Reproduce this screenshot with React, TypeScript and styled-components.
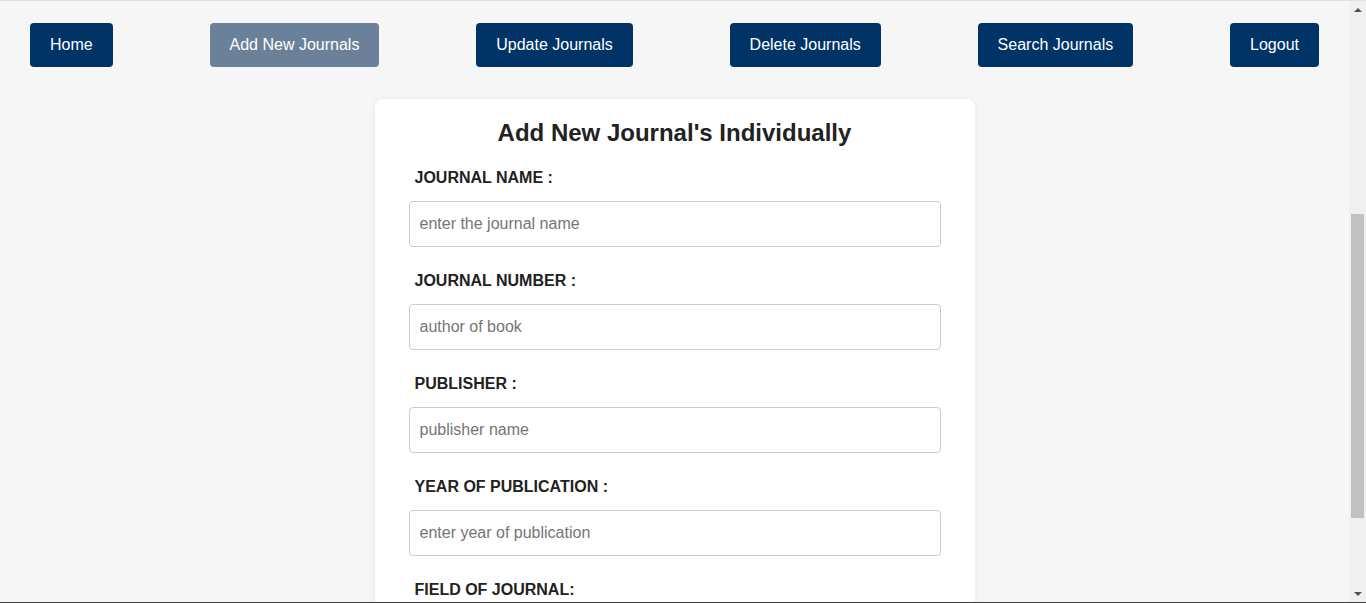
import React from "react";
import styled, { createGlobalStyle } from "styled-components";

const GlobalStyle = createGlobalStyle`
  body {
    margin: 0;
    background: #f6f6f6;
    font-family: "Liberation Sans", Arial, sans-serif;
    color: #222;
  }
`;

const Frame = styled.div`
  height: 100vh;
  box-sizing: border-box;
  display: flex;
  flex-direction: column;
  border-top: 1px solid #e2e2e2;
  border-bottom: 1px solid #3c3c3c;
  overflow: hidden;
`;

const Row = styled.div`
  flex: 1;
  min-height: 0;
  display: flex;
`;

const Main = styled.main`
  flex: 1;
  min-width: 0;
  overflow: hidden;
`;

const ScrollBar = styled.div`
  width: 17px;
  display: flex;
  flex-direction: column;
  background: #f0f0f0;
`;

const ScrollArrow = styled.div<{ $down?: boolean }>`
  height: 17px;
  display: flex;
  align-items: center;
  justify-content: center;

  &::after {
    content: "";
    border-left: 4px solid transparent;
    border-right: 4px solid transparent;
    ${(props) =>
      props.$down
        ? "border-top: 4px solid #505050;"
        : "border-bottom: 4px solid #505050;"}
  }
`;

const ScrollTrack = styled.div`
  flex: 1;
  padding: 196px 2px 0;
`;

const ScrollThumb = styled.div`
  height: 304px;
  background: #c1c1c1;
`;

const Nav = styled.nav`
  display: flex;
  justify-content: space-between;
  align-items: center;
  padding: 22px 30px 0;
`;

const NavButton = styled.button<{ $active?: boolean }>`
  height: 44px;
  padding: 0 20px;
  border: none;
  border-radius: 4px;
  background: ${(props) => (props.$active ? "#6b8199" : "#003366")};
  color: #fff;
  font-family: inherit;
  font-size: 16px;
  cursor: pointer;
`;

const Card = styled.form`
  width: 600px;
  box-sizing: border-box;
  margin: 32px auto 40px;
  padding: 20px 34px 30px;
  background: #fff;
  border-radius: 8px;
  box-shadow: 0 0 6px rgba(0, 0, 0, 0.06);
`;

const Title = styled.h2`
  margin: 0 0 22px;
  font-size: 24px;
  line-height: 28px;
  text-align: center;
  color: #222;
`;

const Field = styled.div`
  display: flex;
  flex-direction: column;
  margin-bottom: 25px;
`;

const Label = styled.label`
  padding-left: 6px;
  margin-bottom: 14px;
  font-size: 16px;
  line-height: 18px;
  font-weight: bold;
  color: #222;
`;

const Input = styled.input`
  height: 46px;
  box-sizing: border-box;
  padding: 0 10px;
  border: 1px solid #ccc;
  border-radius: 4px;
  font-family: inherit;
  font-size: 16px;
  color: #222;

  &::placeholder {
    color: #757575;
  }
`;

const Submit = styled.button`
  width: 100%;
  height: 46px;
  border: none;
  border-radius: 4px;
  background: #003366;
  color: #fff;
  font-family: inherit;
  font-size: 16px;
`;

const links = [
  "Home",
  "Add New Journals",
  "Update Journals",
  "Delete Journals",
  "Search Journals",
  "Logout",
];

const fields = [
  { label: "JOURNAL NAME :", placeholder: "enter the journal name" },
  { label: "JOURNAL NUMBER :", placeholder: "author of book" },
  { label: "PUBLISHER :", placeholder: "publisher name" },
  { label: "YEAR OF PUBLICATION :", placeholder: "enter year of publication" },
  { label: "FIELD OF JOURNAL:", placeholder: "enter field of journal" },
];

const App: React.FC = () => {
  return (
    <Frame>
      <GlobalStyle />
      <Row>
        <Main>
          <Nav>
            {links.map((link) => (
              <NavButton key={link} $active={link === "Add New Journals"}>
                {link}
              </NavButton>
            ))}
          </Nav>
          <Card onSubmit={(e) => e.preventDefault()}>
            <Title>Add New Journal's Individually</Title>
            {fields.map((f) => (
              <Field key={f.label}>
                <Label>{f.label}</Label>
                <Input type="text" placeholder={f.placeholder} />
              </Field>
            ))}
            <Submit type="submit">Add Journal</Submit>
          </Card>
        </Main>
        <ScrollBar>
          <ScrollArrow />
          <ScrollTrack>
            <ScrollThumb />
          </ScrollTrack>
          <ScrollArrow $down />
        </ScrollBar>
      </Row>
    </Frame>
  );
};

export default App;
